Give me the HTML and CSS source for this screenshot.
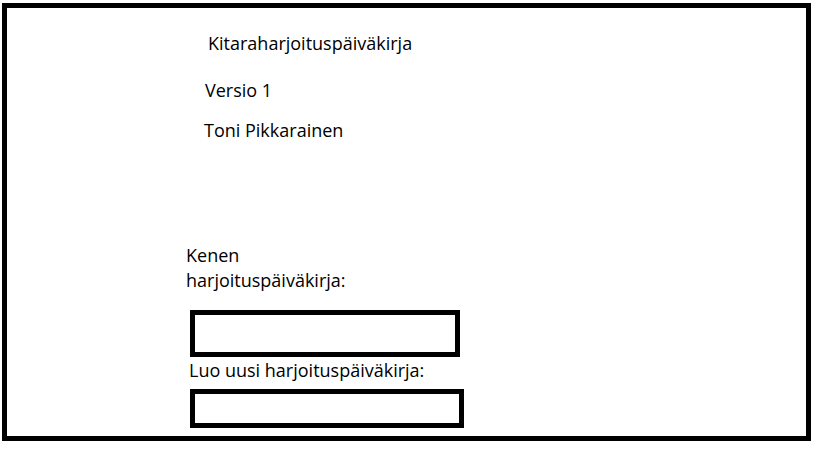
FILE: index.html
```html
<!DOCTYPE html>
<html lang="fi">
<head>
<meta charset="utf-8">
<title>Kitaraharjoituspäiväkirja</title>
<link rel="stylesheet" href="styles.css">
</head>
<body>
<main class="frame">
  <header class="intro">
    <h1 class="title">Kitaraharjoituspäiväkirja</h1>
    <p class="version">Versio 1</p>
    <p class="author">Toni Pikkarainen</p>
  </header>
  <form class="diary-form">
    <label class="label label-who" for="who">Kenen harjoituspäiväkirja:</label>
    <input class="field field-who" id="who" type="text">
    <label class="label label-new" for="new">Luo uusi harjoituspäiväkirja:</label>
    <input class="field field-new" id="new" type="text">
  </form>
</main>
</body>
</html>
```
FILE: styles.css
```css
html, body {
  margin: 0;
  padding: 0;
  background: #fff;
}

body {
  font-family: "Open Sans", "Noto Sans", sans-serif;
  font-size: 18px;
  line-height: 24px;
  color: #000;
}

.frame {
  box-sizing: border-box;
  width: 809px;
  height: 438px;
  margin: 3px 0 0 2px;
  border: 5px solid #000;
  display: flex;
  flex-direction: column;
}

.intro {
  display: flex;
  flex-direction: column;
}

.title,
.version,
.author {
  margin: 0;
  font-size: 18px;
  font-weight: 400;
  line-height: 24px;
}

.title {
  margin: 23px 0 0 201px;
}

.version {
  margin: 23px 0 0 198px;
}

.author {
  margin: 16px 0 0 197px;
}

.diary-form {
  display: flex;
  flex-direction: column;
  align-items: flex-start;
  margin: 101px 0 0 0;
}

.label {
  display: block;
}

.label-who {
  width: 175px;
  margin-left: 179px;
  line-height: 25px;
}

.label-new {
  margin: 1px 0 0 182px;
}

.field {
  display: block;
  box-sizing: border-box;
  border: 5px solid #000;
  border-radius: 0;
  background: #fff;
  padding: 0;
  font: inherit;
  outline: none;
}

.field-who {
  width: 270px;
  height: 47px;
  margin: 17px 0 0 183px;
}

.field-new {
  width: 274px;
  height: 39px;
  margin: 7px 0 0 183px;
}
```
